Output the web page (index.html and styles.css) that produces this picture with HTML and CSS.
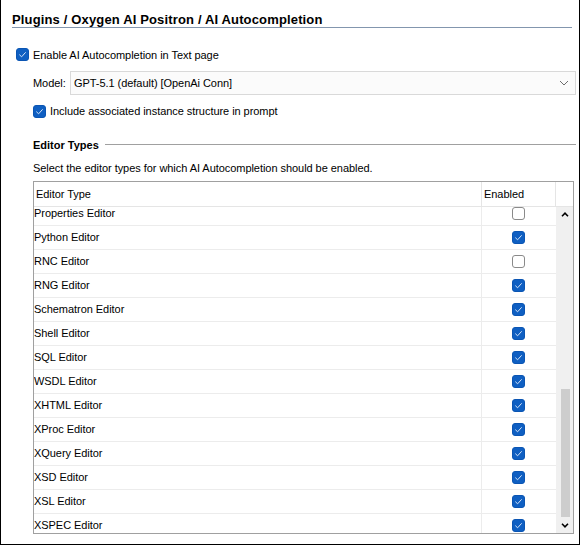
FILE: index.html
```html
<!DOCTYPE html>
<html>
<head>
<meta charset="utf-8">
<link rel="stylesheet" href="styles.css">
</head>
<body>
<div class="frame">
  <div class="title">Plugins / Oxygen AI Positron / AI Autocompletion</div>

  <label class="check-row row-main">
    <svg class="cb" viewBox="0 0 13 13"><rect x="0.5" y="0.5" width="12" height="12" rx="2.5" class="cb-on"/><polyline points="3.6,6.9 5.6,8.8 9.4,4.6" class="cb-tick"/></svg>
    <span>Enable AI Autocompletion in Text page</span>
  </label>

  <div class="model-row">
    <span class="model-label">Model:</span>
    <div class="combo">
      <span>GPT-5.1 (default) [OpenAi Conn]</span>
      <svg class="combo-arrow" viewBox="0 0 10 6"><polyline points="1,1 5,5 9,1"/></svg>
    </div>
  </div>

  <label class="check-row row-sub">
    <svg class="cb" viewBox="0 0 13 13"><rect x="0.5" y="0.5" width="12" height="12" rx="2.5" class="cb-on"/><polyline points="3.6,6.9 5.6,8.8 9.4,4.6" class="cb-tick"/></svg>
    <span>Include associated instance structure in prompt</span>
  </label>

  <div class="section-head">
    <span>Editor Types</span>
    <div class="section-line"></div>
  </div>

  <div class="desc">Select the editor types for which AI Autocompletion should be enabled.</div>

  <div class="table">
    <div class="thead">
      <div class="th th-type">Editor Type</div>
      <div class="th th-en">Enabled</div>
      <div class="th th-fill"></div>
    </div>
    <div class="tbody">
      <div class="rows" id="rows"></div>
      <div class="scrollbar">
        <svg class="sb-arrow" viewBox="0 0 8 5"><polyline points="1,4.2 4,1.2 7,4.2"/></svg>
        <div class="sb-track"><div class="sb-thumb"></div></div>
        <svg class="sb-arrow sb-down" viewBox="0 0 8 5"><polyline points="1,0.8 4,3.8 7,0.8"/></svg>
      </div>
    </div>
  </div>
</div>
<script src="app.js"></script>
</body>
</html>
```

FILE: app.js
```js
const data = [
  ["Properties Editor", false],
  ["Python Editor", true],
  ["RNC Editor", false],
  ["RNG Editor", true],
  ["Schematron Editor", true],
  ["Shell Editor", true],
  ["SQL Editor", true],
  ["WSDL Editor", true],
  ["XHTML Editor", true],
  ["XProc Editor", true],
  ["XQuery Editor", true],
  ["XSD Editor", true],
  ["XSL Editor", true],
  ["XSPEC Editor", true]
];
const on = '<svg class="cb" viewBox="0 0 13 13"><rect x="0.5" y="0.5" width="12" height="12" rx="2.5" class="cb-on"/><polyline points="3.6,6.9 5.6,8.8 9.4,4.6" class="cb-tick"/></svg>';
const off = '<svg class="cb" viewBox="0 0 13 13"><rect x="0.5" y="0.5" width="12" height="12" rx="2.5" class="cb-off"/></svg>';
const rows = document.getElementById("rows");
rows.innerHTML = data.map(([name, en]) =>
  '<div class="tr"><div class="td td-type">' + name + '</div><div class="td td-en">' + (en ? on : off) + '</div></div>'
).join("");
```

FILE: styles.css
```css
* { box-sizing: border-box; }
html, body { margin: 0; padding: 0; background: #fff; }
body {
  font-family: "Liberation Sans", Arial, sans-serif;
  font-size: 11px;
  letter-spacing: -0.05px;
  color: #000;
}
.frame {
  width: 580px;
  height: 546px;
  margin-top: -1px;
  border: 1px solid #000;
  display: flex;
  flex-direction: column;
  overflow: hidden;
}
.title {
  margin: 12px 7px 0 11px;
  height: 16px;
  line-height: 15px;
  font-size: 13px;
  font-weight: bold;
  letter-spacing: 0.15px;
  border-bottom: 1px solid #8396ae;
}
.check-row {
  display: flex;
  align-items: center;
  gap: 4px;
  height: 17px;
}
.row-main { margin: 18px 0 0 15px; }
.row-sub { margin: 7px 0 0 32px; height: 18px; }
.cb { width: 13px; height: 13px; flex: none; display: block; }
.cb-on { fill: #0f5fc2; stroke: #0b55b3; stroke-width: 1; }
.cb-off { fill: #fff; stroke: #8a8a8a; stroke-width: 1; }
.cb-tick { fill: none; stroke: #d6e4f7; stroke-width: 1; stroke-linecap: round; stroke-linejoin: round; }

.model-row {
  display: flex;
  align-items: center;
  margin: 8px 3px 0 32px;
  height: 24px;
}
.model-label { width: 37px; flex: none; }
.combo {
  flex: 1;
  height: 24px;
  border: 1px solid #d9d9d9;
  background: #fbfbfb;
  display: flex;
  align-items: center;
  justify-content: space-between;
  padding: 0 6px 0 3px;
}
.combo-arrow { width: 10px; height: 6px; }
.combo-arrow polyline { fill: none; stroke: #6d6d6d; stroke-width: 1; }

.section-head {
  display: flex;
  align-items: center;
  gap: 6px;
  margin: 17px 3px 0 32px;
  height: 16px;
  font-weight: bold;
  letter-spacing: 0;
}
.section-line { flex: 1; height: 1px; background: #a0a0a0; margin-top: -1px; }

.desc {
  margin: 8px 0 0 32px;
  height: 16px;
  line-height: 15px;
}

.table {
  margin: 4px 0 0 32px;
  width: 541px;
  height: 353px;
  border: 1px solid #a0a0a0;
  display: flex;
  flex-direction: column;
}
.thead {
  display: flex;
  height: 25px;
  flex: none;
  border-bottom: 1px solid #e5e5e5;
}
.th { display: flex; align-items: center; padding-left: 2px; padding-bottom: 1px; }
.th-type { width: 448px; border-right: 1px solid #e5e5e5; }
.th-en { width: 74px; border-right: 1px solid #e5e5e5; }
.th-fill { width: 17px; }
.tbody { flex: 1; display: flex; overflow: hidden; }
.rows { width: 522px; overflow: hidden; }
.rows .tr:first-child { margin-top: -5px; }
.tr {
  display: flex;
  height: 24px;
  border-bottom: 1px solid #ececec;
}
.td { display: flex; align-items: center; }
.td-type { width: 448px; border-right: 1px solid #ececec; padding-bottom: 1px; }
.td-en { width: 74px; justify-content: center; padding-right: 1px; }

.scrollbar {
  width: 17px;
  background: #f0f0f0;
  display: flex;
  flex-direction: column;
  align-items: center;
}
.sb-arrow { width: 8px; height: 5px; margin: 5px 0 4px; flex: none; }
.sb-down { margin: 4px 0 5px; }
.sb-arrow polyline { fill: none; stroke: #000; stroke-width: 1.6; }
.sb-track { flex: 1; width: 100%; display: flex; flex-direction: column; justify-content: flex-end; padding: 0 3px 2px 5px; }
.sb-thumb { height: 128px; background: #cdcdcd; }
```
